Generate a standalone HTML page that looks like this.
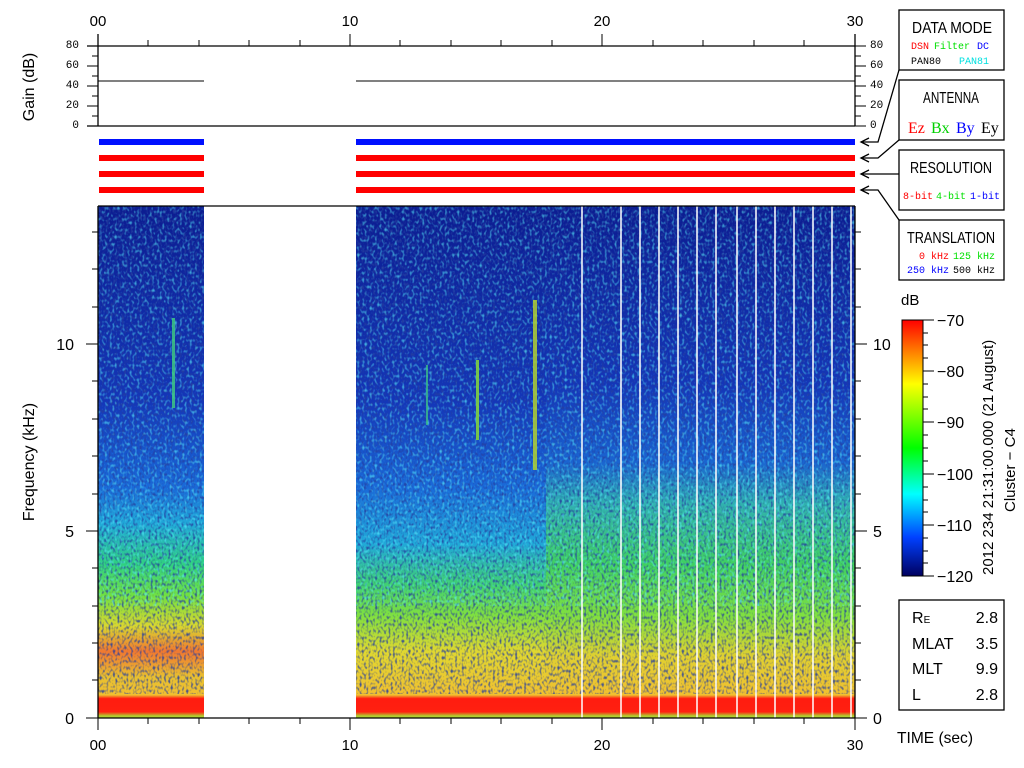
<!DOCTYPE html>
<html><head><meta charset="utf-8"><style>
html,body{margin:0;padding:0;background:#fff;width:1024px;height:768px;overflow:hidden}
svg text{font-family:"Liberation Sans Narrow","Liberation Sans",sans-serif}
.m{font-family:"Liberation Mono",monospace !important}
</style></head><body>
<svg width="1024" height="768" viewBox="0 0 1024 768" xmlns="http://www.w3.org/2000/svg">
<defs>
<linearGradient id="spL" x1="0" y1="206" x2="0" y2="718" gradientUnits="userSpaceOnUse">
<stop offset="0" stop-color="#0c1c90"/>
<stop offset="0.38" stop-color="#1436b8"/>
<stop offset="0.55" stop-color="#1a6ad8"/>
<stop offset="0.62" stop-color="#20a8d8"/>
<stop offset="0.70" stop-color="#30d080"/>
<stop offset="0.76" stop-color="#70e040"/>
<stop offset="0.82" stop-color="#d8d830"/>
<stop offset="0.87" stop-color="#f07830"/>
<stop offset="0.92" stop-color="#e8c030"/>
<stop offset="0.955" stop-color="#f0c030"/>
<stop offset="0.962" stop-color="#ff1c10"/>
<stop offset="0.988" stop-color="#ff2010"/>
<stop offset="0.996" stop-color="#b0d030"/>
</linearGradient>
<linearGradient id="spR" x1="0" y1="206" x2="0" y2="718" gradientUnits="userSpaceOnUse">
<stop offset="0" stop-color="#0c1c90"/>
<stop offset="0.35" stop-color="#1436b8"/>
<stop offset="0.50" stop-color="#1a64d0"/>
<stop offset="0.58" stop-color="#30b0b0"/>
<stop offset="0.70" stop-color="#40d060"/>
<stop offset="0.80" stop-color="#80e040"/>
<stop offset="0.88" stop-color="#e0d030"/>
<stop offset="0.955" stop-color="#f0c030"/>
<stop offset="0.962" stop-color="#ff1c10"/>
<stop offset="0.988" stop-color="#ff2010"/>
<stop offset="0.996" stop-color="#b0d030"/>
</linearGradient>
<linearGradient id="spM" x1="0" y1="206" x2="0" y2="718" gradientUnits="userSpaceOnUse">
<stop offset="0" stop-color="#0c1c90"/>
<stop offset="0.38" stop-color="#1436b8"/>
<stop offset="0.55" stop-color="#1a6ad8"/>
<stop offset="0.66" stop-color="#20a8d8"/>
<stop offset="0.74" stop-color="#40d070"/>
<stop offset="0.80" stop-color="#80e040"/>
<stop offset="0.87" stop-color="#e0d830"/>
<stop offset="0.955" stop-color="#f0c030"/>
<stop offset="0.962" stop-color="#ff1c10"/>
<stop offset="0.988" stop-color="#ff2010"/>
<stop offset="0.996" stop-color="#b0d030"/>
</linearGradient>
<linearGradient id="cb" x1="0" y1="0" x2="0" y2="1">
<stop offset="0" stop-color="#ff0000"/>
<stop offset="0.25" stop-color="#ffff00"/>
<stop offset="0.5" stop-color="#00ff00"/>
<stop offset="0.68" stop-color="#00ffff"/>
<stop offset="0.85" stop-color="#0040ff"/>
<stop offset="1" stop-color="#000060"/>
</linearGradient>
<filter id="nz" x="0" y="0" width="100%" height="100%">
<feTurbulence type="fractalNoise" baseFrequency="0.45 0.3" numOctaves="1" seed="4"/>
<feColorMatrix type="matrix" values="0 0 0 0 0.02  0 0 0 0 0.05  0 0 0 0 0.35  0 0 0 3.2 -1.5"/>
</filter>
<filter id="nz2" x="0" y="0" width="100%" height="100%">
<feTurbulence type="fractalNoise" baseFrequency="0.4 0.28" numOctaves="1" seed="9"/>
<feColorMatrix type="matrix" values="0 0 0 0 0.1  0 0 0 0 0.9  0 0 0 0 1  0 0 0 3 -1.5"/>
</filter>
</defs>

<rect x="98" y="206" width="106" height="512" fill="url(#spL)"/>
<rect x="356" y="206" width="190" height="512" fill="url(#spM)"/>
<rect x="546" y="206" width="309" height="512" fill="url(#spR)"/>
<rect x="98" y="206" width="757" height="488" filter="url(#nz)" opacity="0.85"/>
<rect x="98" y="206" width="757" height="400" filter="url(#nz2)" opacity="0.65"/>
<rect x="204" y="206" width="152" height="513" fill="#fff"/>
<rect x="172" y="318" width="3" height="90" fill="#40d080" opacity="0.8"/>
<rect x="476" y="360" width="3" height="80" fill="#80d040" opacity="0.9"/>
<rect x="533" y="300" width="4" height="170" fill="#b0d030" opacity="0.85"/>
<rect x="426" y="365" width="2" height="60" fill="#40d080" opacity="0.7"/>
<g stroke="#fff" stroke-width="1.5">
<line x1="582" y1="206" x2="582" y2="718"/><line x1="621" y1="206" x2="621" y2="718"/>
<line x1="640" y1="206" x2="640" y2="718"/><line x1="659" y1="206" x2="659" y2="718"/>
<line x1="678" y1="206" x2="678" y2="718"/><line x1="697" y1="206" x2="697" y2="718"/>
<line x1="716" y1="206" x2="716" y2="718"/><line x1="737" y1="206" x2="737" y2="718"/>
<line x1="756" y1="206" x2="756" y2="718"/><line x1="775" y1="206" x2="775" y2="718"/>
<line x1="794" y1="206" x2="794" y2="718"/><line x1="813" y1="206" x2="813" y2="718"/>
<line x1="832" y1="206" x2="832" y2="718"/><line x1="851" y1="206" x2="851" y2="718"/>
</g>

<g stroke="#000" stroke-width="1.3" fill="none">
<line x1="98" y1="206" x2="855" y2="206"/>
<line x1="98" y1="206" x2="98" y2="718"/>
<line x1="855" y1="206" x2="855" y2="718"/>
<line x1="98" y1="718" x2="855" y2="718"/>
<line x1="87" y1="46" x2="855" y2="46"/>
<line x1="87" y1="126" x2="855" y2="126"/>
<line x1="98" y1="34" x2="98" y2="126"/>
<line x1="855" y1="34" x2="855" y2="126"/>
</g>
<g stroke="#000" stroke-width="1">
<line x1="98" y1="81" x2="204" y2="81"/><line x1="356" y1="81" x2="855" y2="81"/>
<line x1="87" y1="66" x2="98" y2="66"/><line x1="87" y1="86" x2="98" y2="86"/><line x1="87" y1="106" x2="98" y2="106"/>
<line x1="92" y1="56" x2="98" y2="56"/><line x1="92" y1="76" x2="98" y2="76"/><line x1="92" y1="96" x2="98" y2="96"/><line x1="92" y1="116" x2="98" y2="116"/>
<line x1="855" y1="46" x2="866" y2="46"/><line x1="855" y1="66" x2="866" y2="66"/><line x1="855" y1="86" x2="866" y2="86"/><line x1="855" y1="106" x2="866" y2="106"/><line x1="855" y1="126" x2="866" y2="126"/>
<line x1="855" y1="56" x2="861" y2="56"/><line x1="855" y1="76" x2="861" y2="76"/><line x1="855" y1="96" x2="861" y2="96"/><line x1="855" y1="116" x2="861" y2="116"/>
<line x1="148" y1="40" x2="148" y2="46"/><line x1="199" y1="40" x2="199" y2="46"/><line x1="249" y1="40" x2="249" y2="46"/><line x1="300" y1="40" x2="300" y2="46"/>
<line x1="350" y1="34" x2="350" y2="46"/><line x1="400" y1="40" x2="400" y2="46"/><line x1="451" y1="40" x2="451" y2="46"/><line x1="501" y1="40" x2="501" y2="46"/><line x1="552" y1="40" x2="552" y2="46"/>
<line x1="602" y1="34" x2="602" y2="46"/><line x1="653" y1="40" x2="653" y2="46"/><line x1="703" y1="40" x2="703" y2="46"/><line x1="754" y1="40" x2="754" y2="46"/><line x1="804" y1="40" x2="804" y2="46"/>
<line x1="98" y1="718" x2="98" y2="730"/><line x1="148" y1="718" x2="148" y2="724"/><line x1="199" y1="718" x2="199" y2="724"/><line x1="249" y1="718" x2="249" y2="724"/><line x1="300" y1="718" x2="300" y2="724"/>
<line x1="350" y1="718" x2="350" y2="730"/><line x1="400" y1="718" x2="400" y2="724"/><line x1="451" y1="718" x2="451" y2="724"/><line x1="501" y1="718" x2="501" y2="724"/><line x1="552" y1="718" x2="552" y2="724"/>
<line x1="602" y1="718" x2="602" y2="730"/><line x1="653" y1="718" x2="653" y2="724"/><line x1="703" y1="718" x2="703" y2="724"/><line x1="754" y1="718" x2="754" y2="724"/><line x1="804" y1="718" x2="804" y2="724"/><line x1="855" y1="718" x2="855" y2="730"/>
<line x1="86" y1="344" x2="98" y2="344"/><line x1="86" y1="531" x2="98" y2="531"/><line x1="86" y1="718" x2="98" y2="718"/>
<line x1="92" y1="232" x2="98" y2="232"/><line x1="92" y1="269" x2="98" y2="269"/><line x1="92" y1="307" x2="98" y2="307"/><line x1="92" y1="381" x2="98" y2="381"/><line x1="92" y1="419" x2="98" y2="419"/><line x1="92" y1="456" x2="98" y2="456"/><line x1="92" y1="494" x2="98" y2="494"/><line x1="92" y1="568" x2="98" y2="568"/><line x1="92" y1="606" x2="98" y2="606"/><line x1="92" y1="643" x2="98" y2="643"/><line x1="92" y1="680" x2="98" y2="680"/>
<line x1="855" y1="344" x2="867" y2="344"/><line x1="855" y1="531" x2="867" y2="531"/><line x1="855" y1="718" x2="867" y2="718"/>
<line x1="855" y1="232" x2="861" y2="232"/><line x1="855" y1="269" x2="861" y2="269"/><line x1="855" y1="307" x2="861" y2="307"/><line x1="855" y1="381" x2="861" y2="381"/><line x1="855" y1="419" x2="861" y2="419"/><line x1="855" y1="456" x2="861" y2="456"/><line x1="855" y1="494" x2="861" y2="494"/><line x1="855" y1="568" x2="861" y2="568"/><line x1="855" y1="606" x2="861" y2="606"/><line x1="855" y1="643" x2="861" y2="643"/><line x1="855" y1="680" x2="861" y2="680"/>
</g>

<g>
<rect x="99" y="139" width="105" height="6" fill="#0010ff"/><rect x="356" y="139" width="499" height="6" fill="#0010ff"/>
<rect x="99" y="155" width="105" height="6" fill="#ff0000"/><rect x="356" y="155" width="499" height="6" fill="#ff0000"/>
<rect x="99" y="171" width="105" height="6" fill="#ff0000"/><rect x="356" y="171" width="499" height="6" fill="#ff0000"/>
<rect x="99" y="187" width="105" height="6" fill="#ff0000"/><rect x="356" y="187" width="499" height="6" fill="#ff0000"/>
</g>

<g font-size="15" fill="#000" text-anchor="middle">
<text x="98" y="26">00</text><text x="350" y="26">10</text><text x="602" y="26">20</text><text x="855" y="26">30</text>
<text x="98" y="750">00</text><text x="350" y="750">10</text><text x="602" y="750">20</text><text x="855" y="750">30</text>
</g>
<g font-size="11" fill="#000" text-anchor="end">
<text class="m" x="79" y="48">80</text><text class="m" x="79" y="68">60</text><text class="m" x="79" y="88">40</text><text class="m" x="79" y="108">20</text><text class="m" x="79" y="128">0</text>
</g>
<g font-size="11" fill="#000">
<text class="m" x="870" y="48">80</text><text class="m" x="870" y="68">60</text><text class="m" x="870" y="88">40</text><text class="m" x="870" y="108">20</text><text class="m" x="870" y="128">0</text>
</g>
<g font-size="16" fill="#000">
<text x="74" y="350" text-anchor="end">10</text><text x="74" y="537" text-anchor="end">5</text><text x="74" y="724" text-anchor="end">0</text>
<text x="873" y="350">10</text><text x="873" y="537">5</text><text x="873" y="724">0</text>
</g>
<text font-size="16" transform="translate(34,87) rotate(-90)" text-anchor="middle">Gain (dB)</text>
<text font-size="16" transform="translate(34,462) rotate(-90)" text-anchor="middle">Frequency (kHz)</text>
<text font-size="16" x="897" y="743" textLength="76" lengthAdjust="spacingAndGlyphs">TIME (sec)</text>

<g fill="none" stroke="#000" stroke-width="1.3">
<rect x="899" y="10" width="105" height="60"/>
<rect x="899" y="80" width="105" height="60"/>
<rect x="899" y="150" width="105" height="60"/>
<rect x="899" y="220" width="105" height="60"/>
<rect x="899" y="600" width="105" height="110"/>
<polyline points="899,70 878,142 861,142"/>
<polyline points="899,140 878,158 861,158"/>
<polyline points="899,174 861,174"/>
<polyline points="899,220 878,190 861,190"/>
<polyline points="869,138 861,142 869,146"/>
<polyline points="869,154 861,158 869,162"/>
<polyline points="869,170 861,174 869,178"/>
<polyline points="869,186 861,190 869,194"/>
</g>
<g font-size="16" fill="#000">
<text x="912" y="33" textLength="80" lengthAdjust="spacingAndGlyphs">DATA MODE</text>
<text x="923" y="103" textLength="56" lengthAdjust="spacingAndGlyphs">ANTENNA</text>
<text x="910" y="173" textLength="82" lengthAdjust="spacingAndGlyphs">RESOLUTION</text>
<text x="907" y="243" textLength="88" lengthAdjust="spacingAndGlyphs">TRANSLATION</text>
</g>
<g font-size="10">
<text class="m" x="911" y="49" fill="#ff0000">DSN</text><text class="m" x="934" y="49" fill="#00e000">Filter</text><text class="m" x="977" y="49" fill="#0000ff">DC</text>
<text class="m" x="911" y="64" fill="#000">PAN80</text><text class="m" x="959" y="64" fill="#00e0e0">PAN81</text>
<text class="m" x="903" y="199" fill="#ff0000">8-bit</text><text class="m" x="936" y="199" fill="#00e000">4-bit</text><text class="m" x="970" y="199" fill="#0000ff">1-bit</text>
<text class="m" x="919" y="259" fill="#ff0000">0 kHz</text><text class="m" x="953" y="259" fill="#00e000">125 kHz</text>
<text class="m" x="907" y="273" fill="#0000ff">250 kHz</text><text class="m" x="953" y="273" fill="#000">500 kHz</text>
</g>
<g font-size="16">
<text x="908" y="133" fill="#ff0000" style="font-family:'Liberation Serif',serif">Ez</text>
<text x="931" y="133" fill="#00d000" style="font-family:'Liberation Serif',serif">Bx</text>
<text x="956" y="133" fill="#0000ff" style="font-family:'Liberation Serif',serif">By</text>
<text x="981" y="133" fill="#000" style="font-family:'Liberation Serif',serif">Ey</text>
</g>

<text x="901" y="305" font-size="15">dB</text>
<rect x="902" y="320" width="21" height="256" fill="url(#cb)" stroke="#000" stroke-width="1"/>
<g stroke="#000" stroke-width="1">
<line x1="923" y1="320" x2="934" y2="320"/><line x1="923" y1="371" x2="934" y2="371"/><line x1="923" y1="422" x2="934" y2="422"/><line x1="923" y1="474" x2="934" y2="474"/><line x1="923" y1="525" x2="934" y2="525"/><line x1="923" y1="576" x2="934" y2="576"/>
<line x1="923" y1="333" x2="928" y2="333"/><line x1="923" y1="345" x2="928" y2="345"/><line x1="923" y1="358" x2="928" y2="358"/>
<line x1="923" y1="384" x2="928" y2="384"/><line x1="923" y1="397" x2="928" y2="397"/><line x1="923" y1="409" x2="928" y2="409"/>
<line x1="923" y1="435" x2="928" y2="435"/><line x1="923" y1="448" x2="928" y2="448"/><line x1="923" y1="461" x2="928" y2="461"/>
<line x1="923" y1="487" x2="928" y2="487"/><line x1="923" y1="500" x2="928" y2="500"/><line x1="923" y1="512" x2="928" y2="512"/>
<line x1="923" y1="538" x2="928" y2="538"/><line x1="923" y1="551" x2="928" y2="551"/><line x1="923" y1="563" x2="928" y2="563"/>
</g>
<g font-size="16" fill="#000">
<text x="937" y="326">−70</text><text x="937" y="377">−80</text><text x="937" y="428">−90</text><text x="937" y="480">−100</text><text x="937" y="531">−110</text><text x="937" y="582">−120</text>
</g>
<text font-size="15" transform="translate(993,575) rotate(-90)">2012 234 21:31:00.000 (21 August)</text>
<text font-size="15" transform="translate(1015,512) rotate(-90)">Cluster − C4</text>

<g font-size="16" fill="#000">
<text x="912" y="623">R<tspan font-size="10">E</tspan></text><text x="998" y="623" text-anchor="end">2.8</text>
<text x="912" y="649">MLAT</text><text x="998" y="649" text-anchor="end">3.5</text>
<text x="912" y="674">MLT</text><text x="998" y="674" text-anchor="end">9.9</text>
<text x="912" y="700">L</text><text x="998" y="700" text-anchor="end">2.8</text>
</g>
</svg>
</body></html>
